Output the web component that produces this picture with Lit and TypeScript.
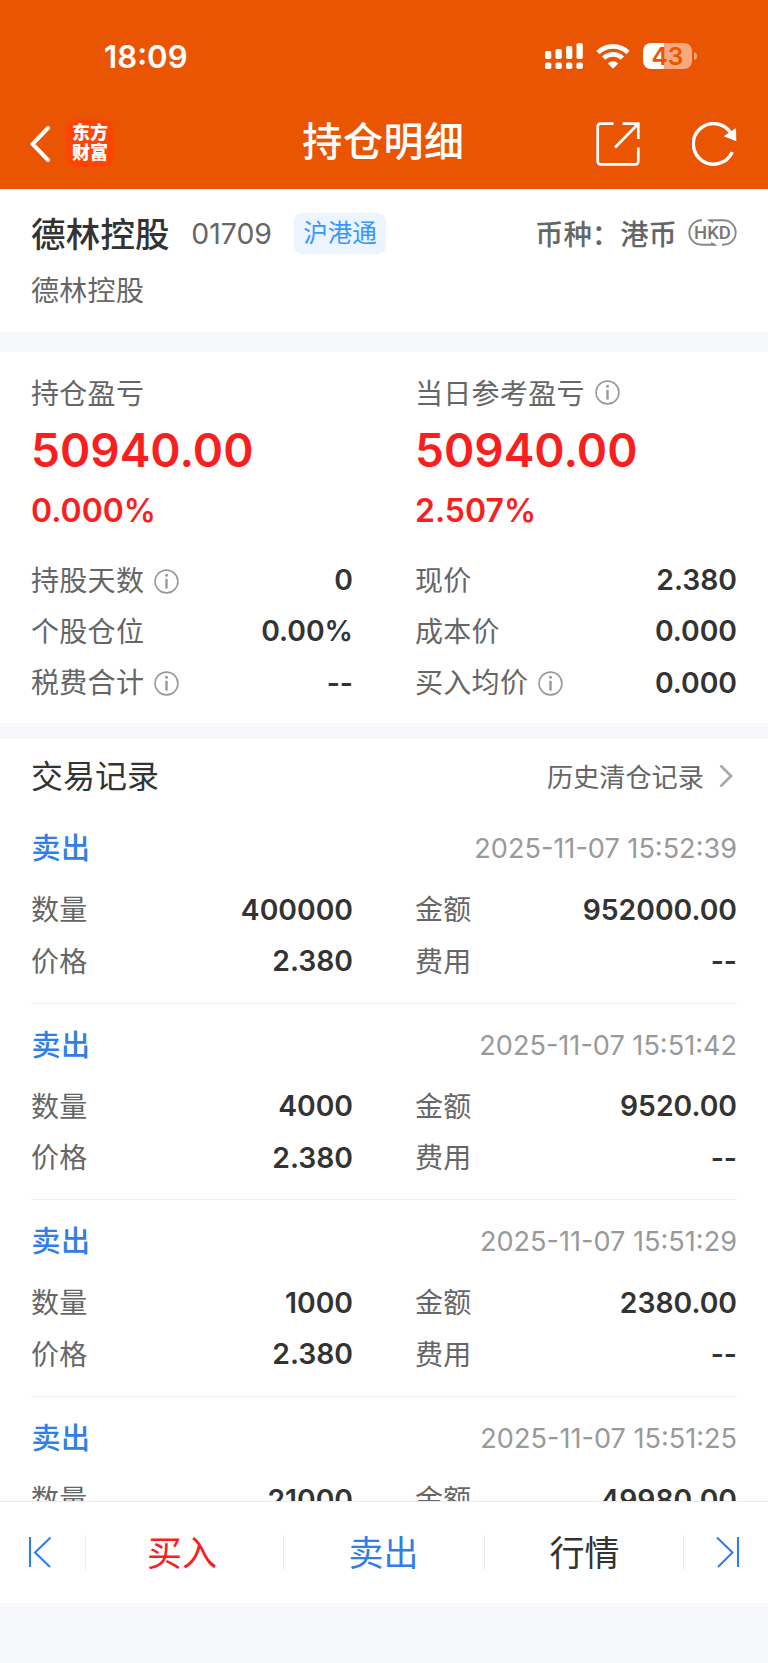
import { LitElement, html, css, svg, nothing } from "lit";
import { customElement, property } from "lit/decorators.js";

interface Trade {
  time: string;
  quantity: string;
  amount: string;
  price: string;
}

const trades: Trade[] = [
  { time: "2025-11-07 15:52:39", quantity: "400000", amount: "952000.00", price: "2.380" },
  { time: "2025-11-07 15:51:42", quantity: "4000", amount: "9520.00", price: "2.380" },
  { time: "2025-11-07 15:51:29", quantity: "1000", amount: "2380.00", price: "2.380" },
  { time: "2025-11-07 15:51:25", quantity: "21000", amount: "49980.00", price: "2.380" },
];

const infoIcon = html`<svg class="info" width="25" height="25" viewBox="0 0 25 25">
  <circle cx="12.5" cy="12.5" r="11.4" fill="none" stroke="#999" stroke-width="1.6" />
  <circle cx="12.5" cy="6.3" r="1.5" fill="#999" />
  <path d="M12.5 9.8v9.8" stroke="#999" stroke-width="2.4" />
</svg>`;

@customElement("stat-row")
class StatRow extends LitElement {
  @property() label = "";
  @property() value = "";
  @property({ type: Boolean }) info = false;

  static styles = css`
    :host {
      display: flex;
      align-items: center;
      height: 51.3px;
      line-height: 40px;
    }
    .label {
      font-size: 28px;
      letter-spacing: 0.3px;
      color: #666;
    }
    .info {
      margin-left: 9.5px;
      margin-top: 1px;
    }
    .value {
      margin-left: auto;
      margin-top: -1px;
      font-size: 28.3px;
      font-weight: 600;
      color: #333;
    }
  `;

  render() {
    return html`<span class="label">${this.label}</span>${this.info ? infoIcon : nothing}
      <span class="value">${this.value}</span>`;
  }
}

@customElement("status-bar")
class StatusBar extends LitElement {
  static styles = css`
    :host {
      display: flex;
      align-items: center;
      height: 113px;
      padding: 0 71px 1px 104px;
      box-sizing: border-box;
      color: #fff;
    }
    .time {
      font-size: 31.2px;
      font-weight: 600;
      line-height: 40px;
      margin: 2px auto 0 0;
    }
    .signal {
      margin-right: 13px;
    }
    .wifi {
      margin-right: 13px;
    }
    .battery {
      overflow: visible;
    }
    .level {
      font: 600 24.5px Inter, sans-serif;
    }
  `;

  render() {
    const bars = [
      [0, 8, 8],
      [10.5, 6, 10],
      [21, 3, 13],
      [31.5, 0, 16],
    ];
    return html`
      <span class="time">18:09</span>
      <svg class="signal" width="38" height="26" viewBox="0 0 38 26" fill="#fff">
        ${bars.map(
          ([x, y, h]) => svg`<rect x=${x} y=${y} width="6.3" height=${h} rx="1.8"/>
            <rect x=${x} y="19.5" width="6.3" height="6.5" rx="1.8"/>`
        )}
      </svg>
      <svg class="wifi" width="34" height="25" viewBox="0 0 34 25">
        <g fill="none" stroke="#fff" stroke-width="4.6">
          <path d="M2 8.6a21.3 21.3 0 0 1 30 0" />
          <path d="M7.6 14.2a13.4 13.4 0 0 1 18.8 0" />
        </g>
        <path d="M11.8 19.5a7.4 7.4 0 0 1 10.4 0L17 24.7z" fill="#fff" />
      </svg>
      <svg class="battery" width="54" height="26" viewBox="0 0 54 26">
        <path d="M8 0H21V26H8A8 8 0 0 1 0 18V8A8 8 0 0 1 8 0Z" fill="#fff" />
        <path d="M21 0H41A8 8 0 0 1 49 8V18A8 8 0 0 1 41 26H21Z" fill="#f6a87e" />
        <path d="M51 9Q54 10 54 13T51 17Z" fill="#f6a87e" />
        <text class="level" x="24.5" y="21.9" text-anchor="middle" fill="#ea5504">43</text>
      </svg>
    `;
  }
}

@customElement("nav-bar")
class NavBar extends LitElement {
  static styles = css`
    :host {
      display: grid;
      grid-template-columns: 1fr auto 1fr;
      align-items: center;
      height: 74px;
      padding: 0 30px;
      color: #fff;
    }
    .left {
      display: flex;
      align-items: center;
      gap: 15px;
      padding-bottom: 16px;
    }
    .logo {
      display: grid;
      align-content: center;
      justify-items: center;
      width: 48px;
      height: 48px;
      border-radius: 10px;
      background: #ff4400;
      font-size: 18px;
      font-weight: 900;
      line-height: 20.5px;
      margin: -1px 0 0 0;
    }
    .title {
      font-size: 40px;
      font-weight: 500;
      letter-spacing: 0.6px;
      line-height: 58px;
      padding-bottom: 19px;
      margin-left: -1px;
    }
    .right {
      display: flex;
      justify-content: flex-end;
      gap: 52px;
      padding-bottom: 15px;
    }
  `;

  render() {
    return html`
      <div class="left">
        <svg width="21" height="36" viewBox="0 0 21 36">
          <path d="M18 2L2.5 18L18 34" fill="none" stroke="#fff" stroke-width="4" stroke-linecap="round" />
        </svg>
        <div class="logo"><span>东方</span><span>财富</span></div>
      </div>
      <div class="title">持仓明细</div>
      <div class="right">
        <svg width="44" height="44" viewBox="0 0 44 44" fill="none" stroke="#fff" stroke-width="2.7">
          <path d="M17.5 1.7H4.5a2.8 2.8 0 0 0-2.8 2.8v35a2.8 2.8 0 0 0 2.8 2.8h35a2.8 2.8 0 0 0 2.8-2.8V25.5" />
          <path d="M26.5 1.7H42.3V17M42 2L19 25.5" />
        </svg>
        <svg width="46" height="44" viewBox="0 0 46 44">
          <path d="M38.7 10.9A20.3 20.3 0 1 0 40.2 30.1" fill="none" stroke="#fff" stroke-width="3.4" />
          <path d="M44 6.1L44.3 19.3L31.7 14.3Z" fill="#fff" />
        </svg>
      </div>
    `;
  }
}

@customElement("trade-item")
class TradeItem extends LitElement {
  @property({ attribute: false }) trade!: Trade;

  static styles = css`
    :host {
      display: block;
      box-sizing: border-box;
      flex: none;
      height: 196.6px;
      padding-top: 14px;
      border-bottom: 1px solid #eeeff1;
    }
    .head {
      display: flex;
      align-items: center;
      justify-content: space-between;
      height: 55px;
      margin-bottom: 8.6px;
    }
    .side {
      font-size: 29px;
      font-weight: 500;
      letter-spacing: 0.6px;
      color: #2f7fe6;
      margin: -5px 0 0 0.5px;
    }
    .time {
      font-size: 27.1px;
      color: #999;
    }
    .grid {
      display: grid;
      grid-template-columns: 322px 321px;
      justify-content: space-between;
    }
    .grid {
      grid-template-columns: 322px 322px;
    }
  `;

  render() {
    const t = this.trade;
    return html`
      <div class="head"><span class="side">卖出</span><span class="time">${t.time}</span></div>
      <div class="grid">
        <stat-row label="数量" value=${t.quantity}></stat-row>
        <stat-row label="金额" value=${t.amount}></stat-row>
        <stat-row label="价格" value=${t.price}></stat-row>
        <stat-row label="费用" value="--"></stat-row>
      </div>
    `;
  }
}

@customElement("action-bar")
class ActionBar extends LitElement {
  static styles = css`
    :host {
      display: grid;
      grid-template-columns: 86px 198px 201px 199px 84px;
      align-items: center;
      flex: none;
      height: 102px;
      box-sizing: border-box;
      border-top: 1px solid #ebebeb;
      background: #fff;
      font-size: 35px;
    }
    .cell {
      display: flex;
      align-items: center;
      justify-content: center;
      height: 35px;
      border-right: 1px solid #ebebeb;
    }
    .cell span {
      margin-top: -5px;
    }
    .cell svg {
      margin-top: -1px;
    }
    .first {
      padding-right: 6px;
    }
    .last {
      padding-left: 4px;
      border-right: 0;
    }
    .buy {
      color: #f91f1f;
      padding-right: 5px;
    }
    .sell {
      color: #2f7fe6;
      padding-right: 1px;
    }
    .quote {
      color: #333;
      padding-left: 1px;
    }
  `;

  render() {
    return html`
      <div class="cell first">
        <svg width="24" height="32" viewBox="0 0 24 32" fill="none" stroke="#2f7fe6" stroke-width="2.1">
          <path d="M2 1V31M22.5 1.5L7 16.5L22 31" />
        </svg>
      </div>
      <div class="cell buy"><span>买入</span></div>
      <div class="cell sell"><span>卖出</span></div>
      <div class="cell quote"><span>行情</span></div>
      <div class="cell last">
        <svg width="24" height="32" viewBox="0 0 24 32" fill="none" stroke="#2f7fe6" stroke-width="2.1">
          <path d="M22 1V31M1 1.5L16.5 16.5L2 31" />
        </svg>
      </div>
    `;
  }
}

@customElement("app-root")
class AppRoot extends LitElement {
  static styles = css`
    :host {
      display: flex;
      flex-direction: column;
      width: 768px;
      height: 1663px;
      overflow: hidden;
      background: #f6f8fb;
      font-family: Inter, "Noto Sans CJK SC", sans-serif;
      color: #333;
    }
    .header {
      flex: none;
      height: 188.5px;
      background: #ea5504;
    }
    .panel {
      flex: none;
      box-sizing: border-box;
      padding: 0 31px;
      background: #fff;
    }
    .stock {
      height: 143.5px;
      padding-top: 20px;
      margin-bottom: 20px;
    }
    .line {
      display: flex;
      align-items: center;
      height: 50px;
    }
    .name {
      font-size: 34.5px;
      font-weight: 500;
      letter-spacing: 0.2px;
      margin-top: -4px;
    }
    .code {
      margin-left: 21.5px;
      font-size: 28.4px;
      color: #666;
    }
    .tag {
      margin-left: 22px;
      width: 92px;
      height: 41px;
      border-radius: 8px;
      background: #ebf4ff;
      color: #3797ff;
      font-size: 24.5px;
      line-height: 41px;
      text-align: center;
    }
    .currency {
      margin: -2px 11px 0 auto;
      font-size: 28.4px;
      font-weight: 500;
      color: #666;
    }
    .currency-icon {
      margin-top: -2px;
    }
    .hkd {
      font: 500 18.5px Roboto, sans-serif;
    }
    .sub {
      font-size: 28px;
      letter-spacing: 0.3px;
      line-height: 40px;
      color: #666;
      margin-top: 12px;
    }
    .summary {
      height: 371px;
      padding-top: 20px;
      margin-bottom: 16px;
    }
    .grid {
      display: grid;
      grid-template-columns: 322px 322px;
      justify-content: space-between;
    }
    .caption {
      display: flex;
      align-items: center;
      height: 40px;
      font-size: 28px;
      letter-spacing: 0.3px;
      color: #666;
    }
    .info {
      margin-left: 10px;
    }
    .big {
      height: 72px;
      margin-top: 2px;
      font-size: 46px;
      font-weight: 600;
      line-height: 73px;
      color: #f91f1f;
    }
    .pct {
      height: 40px;
      margin: 5px 0 24px;
      font-size: 32px;
      font-weight: 600;
      line-height: 40px;
      color: #f91f1f;
    }
    .records {
      display: flex;
      flex-direction: column;
      flex: none;
      height: 762px;
      overflow: hidden;
    }
    .bar {
      display: flex;
      flex: none;
      align-items: center;
      height: 68px;
    }
    .heading {
      font-size: 32px;
      line-height: 46px;
      margin-top: 8px;
    }
    .history {
      margin: 5px 15px 0 auto;
      font-size: 26.2px;
      color: #666;
    }
    .chev {
      margin: 6px 4px 0 0;
    }
  `;

  render() {
    return html`
      <div class="header">
        <status-bar></status-bar>
        <nav-bar></nav-bar>
      </div>
      <div class="panel stock">
        <div class="line">
          <span class="name">德林控股</span>
          <span class="code">01709</span>
          <span class="tag">沪港通</span>
          <span class="currency">币种：港币</span>
          <svg class="currency-icon" width="49" height="27" viewBox="0 0 49 27">
            <g fill="none" stroke="#888" stroke-width="1.9">
              <path d="M14 1.3H13.5A12.2 12.2 0 0 0 13.5 25.7H27" />
              <path d="M21 1.3H35.5A12.2 12.2 0 0 1 35.5 25.7H34" />
            </g>
            <path d="M18 .4L25 4V1ZM23 26.5V23L30 26.5Z" fill="#888" />
            <text class="hkd" x="24.5" y="20" text-anchor="middle" fill="#777">HKD</text>
          </svg>
        </div>
        <div class="sub">德林控股</div>
      </div>
      <div class="panel summary">
        <div class="grid">
          <div>
            <div class="caption">持仓盈亏</div>
            <div class="big">50940.00</div>
            <div class="pct">0.000%</div>
          </div>
          <div>
            <div class="caption">当日参考盈亏${infoIcon}</div>
            <div class="big">50940.00</div>
            <div class="pct">2.507%</div>
          </div>
          <stat-row label="持股天数" value="0" info></stat-row>
          <stat-row label="现价" value="2.380"></stat-row>
          <stat-row label="个股仓位" value="0.00%"></stat-row>
          <stat-row label="成本价" value="0.000"></stat-row>
          <stat-row label="税费合计" value="--" info></stat-row>
          <stat-row label="买入均价" value="0.000" info></stat-row>
        </div>
      </div>
      <div class="panel records">
        <div class="bar">
          <span class="heading">交易记录</span>
          <span class="history">历史清仓记录</span>
          <svg class="chev" width="14" height="24" viewBox="0 0 14 24">
            <path d="M1.5 1.5L12 12L1.5 22.5" fill="none" stroke="#aaa" stroke-width="2.8" />
          </svg>
        </div>
        ${trades.map((t) => html`<trade-item .trade=${t}></trade-item>`)}
      </div>
      <action-bar></action-bar>
    `;
  }
}
